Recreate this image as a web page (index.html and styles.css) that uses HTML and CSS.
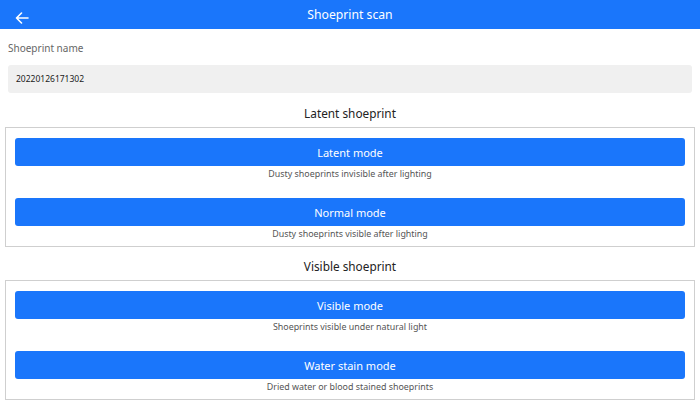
FILE: index.html
```html
<!DOCTYPE html>
<html lang="en">
<head>
    <meta charset="UTF-8">
    <meta name="viewport" content="width=device-width, initial-scale=1.0">
    <title>Shoeprint scan</title>
    <link rel="stylesheet" href="styles.css">
</head>
<body>

    <div class="header">
        <span class="back">
            <svg width="14" height="12" viewBox="0 0 14 12">
                <path d="M13 6H1.5M6.5 1L1.5 6l5 5" fill="none" stroke="#fff" stroke-width="1.6" stroke-linecap="round" stroke-linejoin="round"/>
            </svg>
        </span>
        <h1>Shoeprint scan</h1>
    </div>

    <div class="content">
        <p class="label">Shoeprint name</p>
        <div class="name-input">20220126171302</div>

        <h2>Latent shoeprint</h2>
        <div class="group">
            <button class="mode-btn">Latent mode</button>
            <p class="caption">Dusty shoeprints invisible after lighting</p>
            <button class="mode-btn">Normal mode</button>
            <p class="caption">Dusty shoeprints visible after lighting</p>
        </div>

        <h2>Visible shoeprint</h2>
        <div class="group">
            <button class="mode-btn">Visible mode</button>
            <p class="caption">Shoeprints visible under natural light</p>
            <button class="mode-btn">Water stain mode</button>
            <p class="caption">Dried water or blood stained shoeprints</p>
        </div>
    </div>

</body>
</html>
```

FILE: styles.css
```css
* {
    margin: 0;
    padding: 0;
    box-sizing: border-box;
}

body {
    font-family: 'Noto Sans', Roboto, sans-serif;
    background-color: #fff;
    color: #333;
}

.header {
    position: relative;
    height: 29px;
    background-color: #1a76fb;
    text-align: center;
}

.header h1 {
    font-size: 12.2px;
    font-weight: 400;
    line-height: 29px;
    color: #fff;
}

.back {
    position: absolute;
    left: 15px;
    top: 7px;
}

.content {
    padding-bottom: 20px;
}

.label {
    font-size: 10px;
    line-height: 16px;
    color: #666;
    padding: 11px 8px 0;
}

.name-input {
    margin: 9px 8px 0;
    height: 28px;
    line-height: 28px;
    padding-left: 8px;
    font-size: 8.5px;
    color: #222;
    background-color: #f0f0f0;
    border-radius: 3px;
}

h2 {
    font-size: 11.8px;
    font-weight: 400;
    line-height: 20px;
    text-align: center;
    color: #222;
    margin-top: 10px;
}

.group + h2 {
    margin-top: 9px;
}

.group {
    margin: 4px 5px 0;
    padding: 10px 9px 4px;
    border: 1px solid #cfcfcf;
    display: flex;
    flex-direction: column;
}

.mode-btn {
    height: 28px;
    border: none;
    border-radius: 3px;
    background-color: #1a76fb;
    color: #fff;
    font-family: inherit;
    font-size: 11px;
}

.caption {
    font-size: 8.9px;
    line-height: 16px;
    text-align: center;
    color: #555;
    margin-bottom: 16px;
}

.caption:last-child {
    margin-bottom: 0;
}
```
